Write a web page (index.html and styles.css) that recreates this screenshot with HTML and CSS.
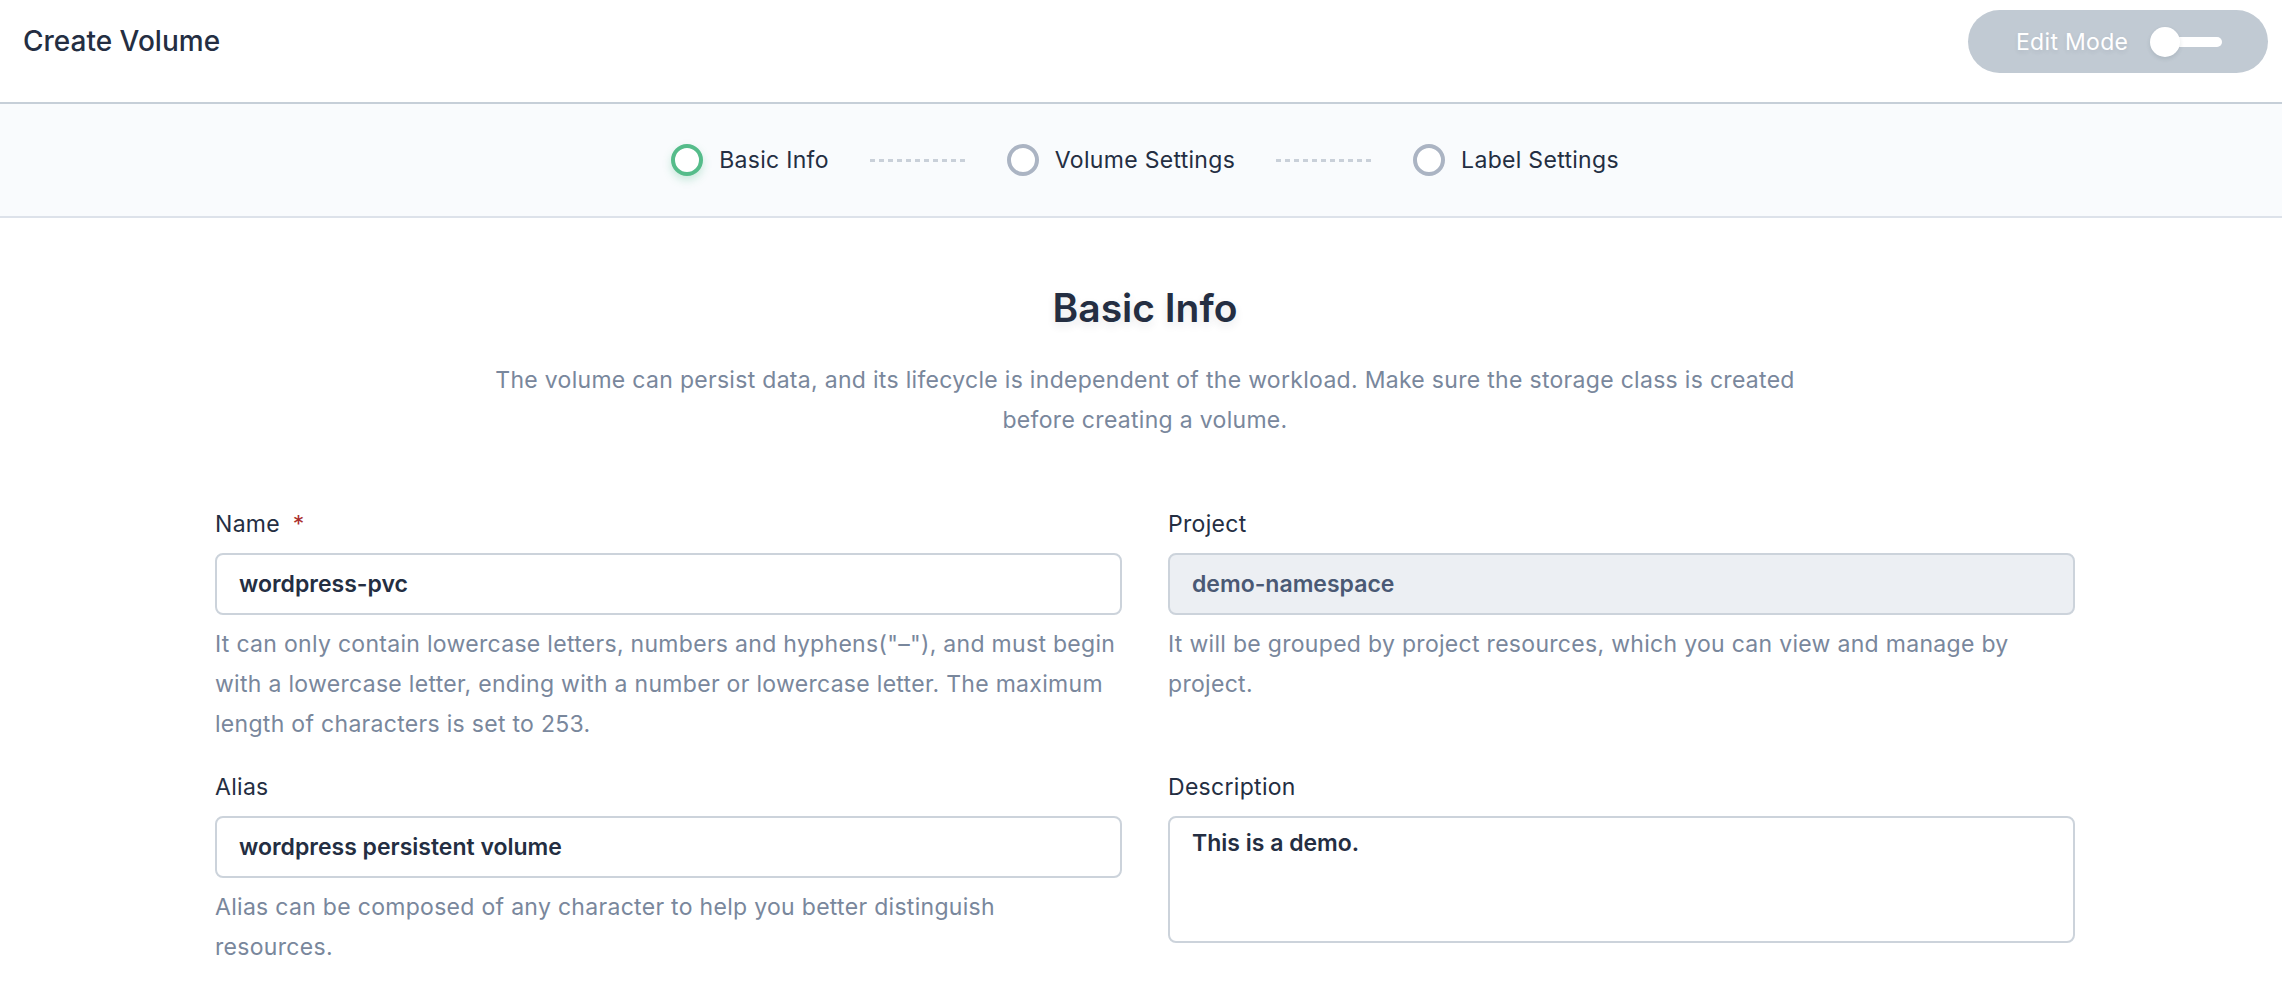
FILE: index.html
```html
<!DOCTYPE html>
<html>
<head>
<meta charset="utf-8">
<link rel="stylesheet" href="styles.css">
</head>
<body>
<header class="topbar">
  <h1 class="title">Create Volume</h1>
  <button class="edit-mode">
    <span class="edit-label">Edit Mode</span>
    <span class="toggle"><span class="toggle-track"></span><span class="toggle-knob"></span></span>
  </button>
</header>
<nav class="steps">
  <div class="step active"><span class="step-dot"></span><span class="step-text">Basic Info</span></div>
  <span class="step-line"></span>
  <div class="step"><span class="step-dot"></span><span class="step-text">Volume Settings</span></div>
  <span class="step-line"></span>
  <div class="step"><span class="step-dot"></span><span class="step-text">Label Settings</span></div>
</nav>
<main class="content">
  <h2 class="section-title">Basic Info</h2>
  <p class="section-desc">The volume can persist data, and its lifecycle is independent of the workload. Make sure the storage class is created before creating a volume.</p>
  <form class="form-grid">
    <div class="field">
      <label class="field-label">Name <span class="required">*</span></label>
      <div class="input">wordpress-pvc</div>
      <p class="field-help">It can only contain lowercase letters, numbers and hyphens("–"), and must begin with a lowercase letter, ending with a number or lowercase letter. The maximum length of characters is set to 253.</p>
    </div>
    <div class="field">
      <label class="field-label">Project</label>
      <div class="input disabled">demo-namespace</div>
      <p class="field-help">It will be grouped by project resources, which you can view and manage by project.</p>
    </div>
    <div class="field">
      <label class="field-label">Alias</label>
      <div class="input">wordpress persistent volume</div>
      <p class="field-help field-help-narrow">Alias can be composed of any character to help you better distinguish resources.</p>
    </div>
    <div class="field">
      <label class="field-label">Description</label>
      <div class="textarea">This is a demo.</div>
    </div>
  </form>
</main>
</body>
</html>
```
FILE: styles.css
```css
* { box-sizing: border-box; }
html, body { margin: 0; padding: 0; background: #ffffff; }
body {
  font-family: Inter, Roboto, "Liberation Sans", sans-serif;
  color: #242e42;
  font-size: 23px;
  line-height: 40px;
  letter-spacing: 0.3px;
  overflow: hidden;
}
.topbar {
  height: 104px;
  display: flex;
  align-items: flex-start;
  justify-content: space-between;
  padding: 10px 14px 0 23px;
  border-bottom: 2px solid #c6cfd8;
}
.title {
  margin: 0;
  font-size: 28px;
  font-weight: 500;
  line-height: 63px;
  letter-spacing: 0;
  color: #242e42;
}
.edit-mode {
  height: 63px;
  width: 300px;
  border: none;
  border-radius: 32px;
  background: #c1cad3;
  display: flex;
  align-items: center;
  padding: 0 0 0 48px;
  font-family: inherit;
  letter-spacing: 0.3px;
}
.edit-label {
  color: #ffffff;
  font-size: 23px;
  text-shadow: 0 2px 4px rgba(36,46,66,0.1);
}
.toggle {
  position: relative;
  width: 72px;
  height: 30px;
  margin-left: 22px;
  display: block;
}
.toggle-track {
  position: absolute;
  left: 14px;
  right: 0;
  top: 10px;
  height: 10px;
  border-radius: 5px;
  background: #ffffff;
}
.toggle-knob {
  position: absolute;
  left: 0;
  top: 0;
  width: 30px;
  height: 30px;
  border-radius: 50%;
  background: #ffffff;
  box-shadow: 0 2px 4px rgba(36,46,66,0.12);
}
.steps {
  height: 114px;
  background: #f9fbfd;
  border-bottom: 2px solid #dde2ea;
  display: flex;
  align-items: center;
  justify-content: center;
  padding-left: 8px;
}
.step {
  display: flex;
  align-items: center;
  gap: 16px;
}
.step-dot {
  width: 32px;
  height: 32px;
  border-radius: 50%;
  border: 4px solid #abb4c3;
  background: #ffffff;
}
.step.active .step-dot {
  border-color: #55bc8a;
  box-shadow: 0 4px 8px rgba(85,188,138,0.3);
}
.step-text {
  font-size: 23px;
  color: #242e42;
}
.step-line {
  width: 96px;
  height: 3px;
  margin: 0 41px;
  background: repeating-linear-gradient(to right, #c9d0d9 0 5px, transparent 5px 9px);
}
.content {
  padding: 62px 0 40px 8px;
}
.section-title {
  margin: 0;
  text-align: center;
  font-size: 39px;
  line-height: 56px;
  font-weight: 600;
  letter-spacing: 0;
  color: #242e42;
  text-shadow: 0 4px 8px rgba(36,46,66,0.1);
}
.section-desc {
  margin: 24px auto 0;
  width: 1330px;
  text-align: center;
  color: #79879c;
  font-size: 23px;
  line-height: 40px;
}
.form-grid {
  margin: 64px 0 0 207px;
  width: 1860px;
  display: grid;
  grid-template-columns: 907px 907px;
  column-gap: 46px;
  row-gap: 23px;
}
.field {
  display: flex;
  flex-direction: column;
}
.field-label {
  font-size: 23px;
  line-height: 40px;
  color: #242e42;
  margin-bottom: 9px;
}
.required {
  color: #ab2f2f;
  margin-left: 6px;
}
.input {
  height: 62px;
  border: 2px solid #ccd3db;
  border-radius: 8px;
  padding: 0 22px;
  display: flex;
  align-items: center;
  font-size: 23px;
  font-weight: 600;
  letter-spacing: 0;
  color: #242e42;
  background: #ffffff;
}
.input.disabled {
  background: #eceff3;
  color: #4a5974;
}
.textarea {
  height: 127px;
  border: 2px solid #ccd3db;
  border-radius: 8px;
  padding: 5px 22px;
  font-size: 23px;
  font-weight: 600;
  letter-spacing: 0;
  line-height: 40px;
  color: #242e42;
}
.field-help {
  margin: 9px 0 0;
  font-size: 23px;
  line-height: 40px;
  color: #79879c;
}
.field-help-narrow {
  max-width: 860px;
}
```
